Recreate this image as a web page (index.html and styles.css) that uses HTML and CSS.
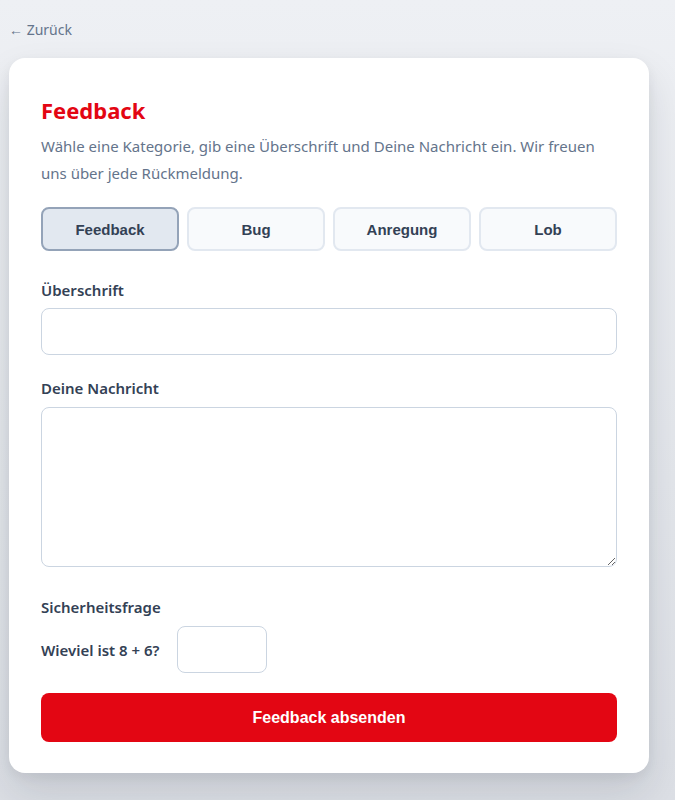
FILE: index.html
```html
<!DOCTYPE html>
<html lang="de">
<head>
<meta charset="utf-8">
<title>Feedback</title>
<link rel="stylesheet" href="styles.css">
</head>
<body>
<div class="page">
  <a class="back" href="#">← Zurück</a>
  <main class="card">
    <h1 class="title">Feedback</h1>
    <p class="intro">Wähle eine Kategorie, gib eine Überschrift und Deine Nachricht ein. Wir freuen uns über jede Rückmeldung.</p>
    <div class="cats">
      <button class="cat active" type="button">Feedback</button>
      <button class="cat" type="button">Bug</button>
      <button class="cat" type="button">Anregung</button>
      <button class="cat" type="button">Lob</button>
    </div>
    <label class="label" for="subject">Überschrift</label>
    <input class="field" id="subject" type="text">
    <label class="label label-msg" for="msg">Deine Nachricht</label>
    <textarea class="field area" id="msg"></textarea>
    <div class="label label-sec">Sicherheitsfrage</div>
    <div class="captcha">
      <label class="cap-q" for="cap">Wieviel ist 8 + 6?</label>
      <input class="field cap-in" id="cap" type="text">
    </div>
    <button class="submit" type="button">Feedback absenden</button>
  </main>
</div>
</body>
</html>
```

FILE: styles.css
```css
* { box-sizing: border-box; }
html, body { margin: 0; padding: 0; }
body {
  min-height: 800px;
  background: linear-gradient(180deg, #eef0f4 0%, #e3e6eb 60%, #dcdfe5 100%);
  font-family: "Noto Sans", "Open Sans", sans-serif;
  color: #334155;
}
.page {
  width: 640px;
  margin-left: 9px;
  padding-top: 19px;
  display: flex;
  flex-direction: column;
}
.back {
  font-size: 14px;
  line-height: 22px;
  color: #64748b;
  text-decoration: none;
  height: 22px;
  margin-bottom: 17px;
}
.card {
  background: #fff;
  border-radius: 16px;
  padding: 32px 32px 31px;
  box-shadow: 0 20px 40px rgba(15, 23, 42, 0.12), 0 4px 12px rgba(15, 23, 42, 0.06);
  display: flex;
  flex-direction: column;
}
.title {
  margin: 0;
  font-size: 22px;
  line-height: 40px;
  font-weight: 700;
  color: #e30613;
}
.intro {
  margin: 3px 0 0;
  font-size: 15px;
  line-height: 27px;
  color: #64748b;
}
.cats {
  display: grid;
  grid-template-columns: repeat(4, 1fr);
  gap: 8px;
  margin-top: 20px;
}
.cat {
  height: 44px;
  border: 2px solid #e2e8f0;
  background: #f8fafc;
  border-radius: 8px;
  font-family: "Liberation Sans", Arial, sans-serif;
  font-weight: 700;
  font-size: 15px;
  color: #334155;
}
.cat.active {
  background: #e2e8f0;
  border-color: #94a3b8;
}
.label {
  display: block;
  font-size: 15px;
  line-height: 22px;
  font-weight: 600;
  color: #334155;
  margin-top: 28px;
  margin-bottom: 7px;
}
.label-msg { margin-top: 22px; margin-bottom: 8px; }
.label-sec { margin-top: 29px; margin-bottom: 8px; }
.field {
  display: block;
  width: 100%;
  height: 47px;
  border: 1px solid #cbd5e1;
  border-radius: 8px;
  background: #fff;
  font-family: inherit;
  font-size: 15px;
  padding: 10px 12px;
}
.area {
  height: 160px;
  resize: vertical;
}
.captcha {
  display: flex;
  align-items: center;
  gap: 18px;
}
.cap-q {
  font-size: 15px;
  font-weight: 600;
  color: #334155;
}
.cap-in {
  width: 90px;
}
.submit {
  margin-top: 20px;
  height: 49px;
  border: 0;
  border-radius: 8px;
  background: #e30613;
  color: #fff;
  font-family: "Liberation Sans", Arial, sans-serif;
  font-weight: 700;
  font-size: 16px;
}
```
